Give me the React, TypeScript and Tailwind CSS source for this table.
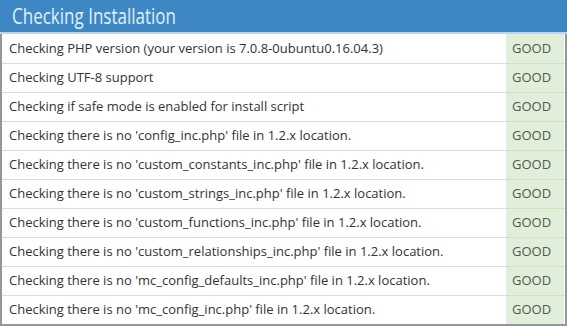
const checks = [
  "Checking PHP version (your version is 7.0.8-0ubuntu0.16.04.3)",
  "Checking UTF-8 support",
  "Checking if safe mode is enabled for install script",
  "Checking there is no 'config_inc.php' file in 1.2.x location.",
  "Checking there is no 'custom_constants_inc.php' file in 1.2.x location.",
  "Checking there is no 'custom_strings_inc.php' file in 1.2.x location.",
  "Checking there is no 'custom_functions_inc.php' file in 1.2.x location.",
  "Checking there is no 'custom_relationships_inc.php' file in 1.2.x location.",
  "Checking there is no 'mc_config_defaults_inc.php' file in 1.2.x location.",
  "Checking there is no 'mc_config_inc.php' file in 1.2.x location.",
];

export default function App() {
  return (
    <div
      className="w-[567px] h-[326px] bg-white overflow-hidden"
      style={{ fontFamily: '"Open Sans", "Liberation Sans", sans-serif' }}
    >
      <div className="flex flex-col h-full border-x-2 border-b-2 border-[#8f989d]">
        {/* Header */}
        <div className="h-[34px] bg-[#3d87c4] border-b-2 border-[#b8d5ec] flex items-center px-[12px] -mx-[2px]">
          <h2 className="inline-block origin-left [transform:scaleX(0.81)] text-[21px] leading-none text-[#e2f2fc] pt-[1px]">
            Checking Installation
          </h2>
        </div>

        {/* Rows */}
        <div className="flex flex-col">
          {checks.map((c, i) => (
            <div
              key={i}
              className={`flex h-[29px] ${i > 0 ? "border-t border-[#d9dcdd]" : ""}`}
            >
              <div className="flex-1 flex items-center pl-[7px] text-[13px] text-[#333]">{c}</div>
              <div
                className={`w-[58px] bg-[#e1eed9] flex items-center pl-[6px] text-[13px] text-[#4b5b4b] ${
                  i > 0 ? "-mt-px border-t border-[#cfe2c4]" : ""
                }`}
              >
                GOOD
              </div>
              <div className="w-[1px] bg-white" />
            </div>
          ))}
        </div>
      </div>
    </div>
  );
}
